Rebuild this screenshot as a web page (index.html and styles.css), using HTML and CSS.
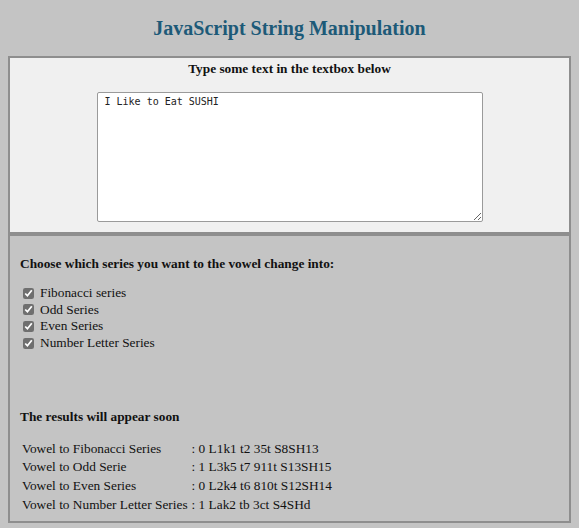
FILE: index.html
```html
<!DOCTYPE html>
<html>
<head>
<meta charset="utf-8">
<link rel="stylesheet" href="styles.css">
</head>
<body>
<h1 class="title">JavaScript String Manipulation</h1>
<section class="input-box">
  <h2 class="prompt">Type some text in the textbox below</h2>
  <textarea class="textbox">I Like to Eat SUSHI</textarea>
</section>
<section class="output-box">
  <h3 class="section-head">Choose which series you want to the vowel change into:</h3>
  <ul class="options">
    <li><label><input type="checkbox" checked> Fibonacci series</label></li>
    <li><label><input type="checkbox" checked> Odd Series</label></li>
    <li><label><input type="checkbox" checked> Even Series</label></li>
    <li><label><input type="checkbox" checked> Number Letter Series</label></li>
  </ul>
  <h3 class="section-head results-head">The results will appear soon</h3>
  <table class="results">
    <tr><td>Vowel to Fibonacci Series</td><td>: 0 L1k1 t2 35t S8SH13</td></tr>
    <tr><td>Vowel to Odd Serie</td><td>: 1 L3k5 t7 911t S13SH15</td></tr>
    <tr><td>Vowel to Even Series</td><td>: 0 L2k4 t6 810t S12SH14</td></tr>
    <tr><td>Vowel to Number Letter Series</td><td>: 1 Lak2 tb 3ct S4SHd</td></tr>
  </table>
</section>
</body>
</html>
```
FILE: styles.css
```css
html, body {
  background: #c4c4c4;
}
body {
  margin: 8px;
  font-family: "Liberation Serif", "Times New Roman", serif;
  font-size: 13.33px;
  color: #111;
}
.title {
  margin: 8px 0 16px;
  text-align: center;
  font-size: 20px;
  line-height: 24px;
  color: #1d5a78;
}
.input-box {
  background: #f0f0f0;
  border: 2px solid #8e8e8e;
  padding: 3px 0 10px;
  text-align: center;
}
.prompt {
  margin: 0 0 15px;
  font-size: 13.33px;
  line-height: 16px;
}
.textbox {
  display: block;
  margin: 0 auto;
  box-sizing: border-box;
  width: 386px;
  height: 130px;
  border: 1px solid #9a9a9a;
  border-radius: 2px;
  background: #fff;
  padding: 2px 7px;
  font-family: "DejaVu Sans Mono", "Liberation Mono", monospace;
  font-size: 10px;
  line-height: 14px;
  color: #222;
  resize: both;
}
.output-box {
  margin-top: 0;
  border: 2px solid #8e8e8e;
  padding: 20px 10px 7px;
  height: 258px;
}
.section-head {
  margin: 0;
  font-size: 13.33px;
  line-height: 16px;
}
.options {
  list-style: none;
  margin: 13px 0 0;
  padding: 0 0 0 3px;
}
.options li {
  line-height: 16.67px;
  height: 16.67px;
}
.options label {
  display: flex;
  align-items: center;
  gap: 6px;
}
.options input {
  margin: 0;
  width: 11px;
  height: 11px;
  accent-color: #6f6f6f;
}
.results-head {
  margin-top: 57px;
}
.results {
  margin-top: 15px;
  border-spacing: 2px 0;
}
.results td {
  padding: 1px 0;
  line-height: 16.67px;
  white-space: nowrap;
}
.results td:first-child {
  padding-right: 2px;
}
```
